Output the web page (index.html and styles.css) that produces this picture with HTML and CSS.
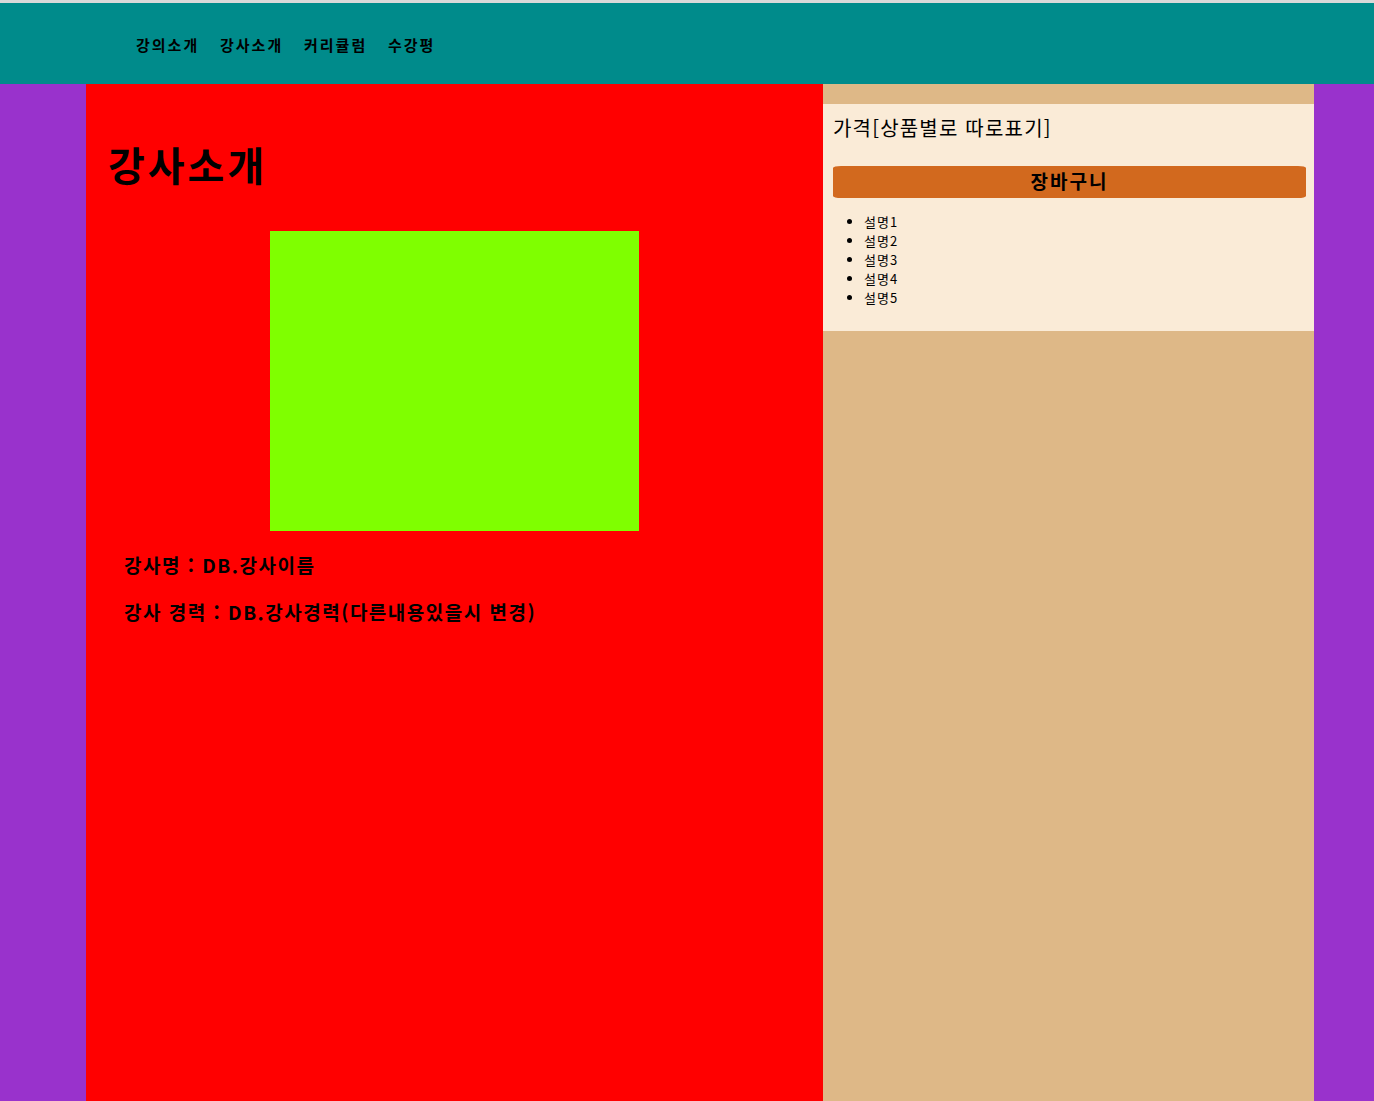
FILE: index.html
```html
<!DOCTYPE html>
<html lang="ko">
<head>
<meta charset="utf-8">
<title>강사소개</title>
<link rel="stylesheet" href="styles.css">
</head>
<body>
<header class="top">
  <nav class="nav">
    <a class="nav-item">강의소개</a>
    <a class="nav-item">강사소개</a>
    <a class="nav-item">커리큘럼</a>
    <a class="nav-item">수강평</a>
  </nav>
</header>
<div class="page">
  <div class="gutter-left"></div>
  <main class="content">
    <h1 class="title">강사소개</h1>
    <div class="photo"></div>
    <p class="info">강사명 : DB.강사이름</p>
    <p class="info">강사 경력 : DB.강사경력(다른내용있을시 변경)</p>
  </main>
  <aside class="side">
    <div class="cart-box">
      <p class="price">가격[상품별로 따로표기]</p>
      <div class="cart-btn">장바구니</div>
      <ul class="desc">
        <li>설명1</li>
        <li>설명2</li>
        <li>설명3</li>
        <li>설명4</li>
        <li>설명5</li>
      </ul>
    </div>
  </aside>
  <div class="gutter-right"></div>
</div>
</body>
</html>
```

FILE: styles.css
```css
* { box-sizing: border-box; }
html, body { margin: 0; padding: 0; }
body {
  font-family: "Noto Sans CJK KR", "Noto Sans", sans-serif;
  color: #000;
  background: #fff;
}
.top {
  height: 84px;
  border-top: 3px solid #d9d9d9;
  background: #008b8b;
  display: flex;
  align-items: center;
  padding-left: 136px;
}
.nav {
  display: flex;
  align-items: center;
  margin-top: 1px;
}
.nav-item {
  width: 84px;
  font-size: 15px;
  font-weight: 700;
  color: #000;
  letter-spacing: 2px;
}
.page {
  display: flex;
  min-height: calc(100vh - 84px);
}
.gutter-left { width: 86px; background: #9932cc; flex: none; }
.gutter-right { width: 60px; background: #9932cc; flex: none; }
.content {
  width: 737px;
  flex: none;
  background: #ff0000;
  padding: 52px 0 0 22px;
}
.title {
  margin: 0;
  font-size: 40px;
  line-height: 56px;
  font-weight: 700;
  letter-spacing: 3px;
}
.photo {
  width: 369px;
  height: 300px;
  background: #7fff00;
  margin: 39px 0 0 162px;
}
.info {
  margin: 20px 0 0 16px;
  font-size: 19px;
  line-height: 27px;
  font-weight: 700;
  letter-spacing: 1.5px;
}
.info + .info { margin-top: 20px; }
.side {
  width: 491px;
  flex: none;
  background: #deb887;
  padding-top: 20px;
}
.cart-box {
  background: #faebd7;
  height: 227px;
  padding: 10px 8px 0 10px;
}
.price {
  margin: 0;
  font-size: 20px;
  line-height: 28px;
  letter-spacing: 1.2px;
}
.cart-btn {
  margin-top: 24px;
  height: 32px;
  background: #d2691e;
  border-radius: 8px / 2px;
  text-align: center;
  font-size: 19px;
  font-weight: 700;
  line-height: 30px;
  letter-spacing: 2px;
}
.desc {
  margin: 14px 0 0;
  padding-left: 31px;
  font-size: 13px;
  line-height: 19px;
  letter-spacing: 1px;
}
```
